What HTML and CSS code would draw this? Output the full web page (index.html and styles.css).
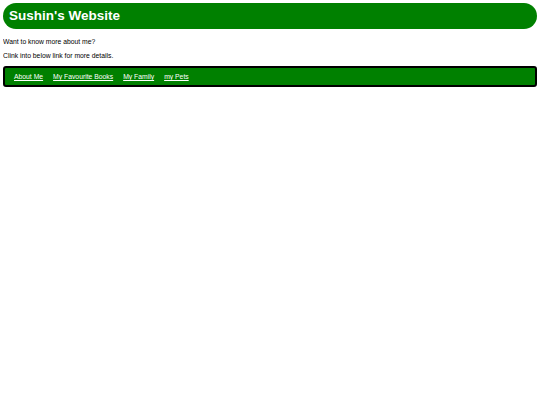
FILE: index.html
```html
<!DOCTYPE html>
<html>
<head><meta charset="UTF-8">
<link rel="stylesheet" href="styles.css"></head>
<body>
<h1 class="title">Sushin's Website</h1>
<div class="intro">
  <p>Want to know more about me?</p>
  <p>Clink into below link for more details.</p>
</div>
<nav class="menu">
  <a href="#">About Me</a>
  <a href="#">My Favourite Books</a>
  <a href="#">My Family</a>
  <a href="#">my Pets</a>
</nav>
</body>
</html>
```

FILE: styles.css
```css
body {
  margin: 3px;
  font-family: "Liberation Sans", Arial, sans-serif;
  font-size: 6.8px;
  color: #000;
}
.title {
  margin: 0;
  padding: 0 6px;
  height: 26px;
  line-height: 26px;
  background-color: green;
  color: #fff;
  font-size: 13.5px;
  border-radius: 13px;
}
.intro {
  margin-top: 6px;
}
.intro p {
  margin: 0;
  line-height: 14px;
}
.menu {
  display: flex;
  gap: 10px;
  margin-top: 3px;
  padding: 0 9px;
  height: 17px;
  align-items: center;
  background-color: green;
  border: 2px solid #000;
  border-radius: 3px;
}
.menu a {
  color: #fff;
}
```
